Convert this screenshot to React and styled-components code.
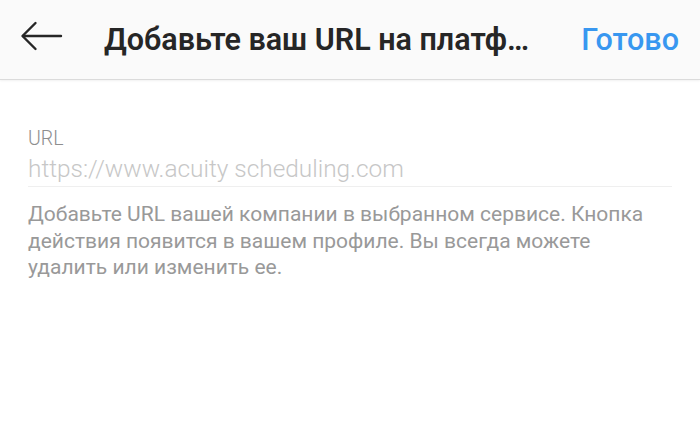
import React from "react";
import styled, { createGlobalStyle } from "styled-components";

const GlobalStyle = createGlobalStyle`
    html, body {
        margin: 0;
        padding: 0;
        background: #ffffff;
    }
    body {
        font-family: Roboto, "Noto Sans", sans-serif;
    }
`;

const Page = styled.div`
    width: 700px;
    height: 421px;
    background: #ffffff;
    overflow: hidden;
`;

const Header = styled.div`
    height: 80px;
    display: flex;
    align-items: center;
    background: #fafafa;
    border-bottom: 1px solid #dbdbdb;
    box-shadow: 0 1px 2px rgba(0, 0, 0, 0.06);
    padding: 0 21px 0 20px;
    box-sizing: border-box;
`;

const BackButton = styled.div`
    width: 44px;
    height: 44px;
    display: flex;
    align-items: center;
    color: #262626;
`;

const Title = styled.div`
    margin-left: 40px;
    width: 428px;
    font-size: 30.5px;
    font-weight: 600;
    color: #262626;
    white-space: nowrap;
    overflow: hidden;
    text-overflow: ellipsis;
`;

const DoneButton = styled.div`
    margin-left: auto;
    font-size: 30.5px;
    font-weight: 500;
    color: #3897f0;
`;

const Body = styled.div`
    padding: 48px 28px 0 28px;
`;

const Label = styled.div`
    font-size: 19.5px;
    font-weight: 300;
    color: #8e8e8e;
    line-height: 22px;
`;

const Field = styled.div`
    margin-top: 4px;
    padding-bottom: 2px;
    border-bottom: 1px solid #efefef;
    font-size: 24.4px;
    font-weight: 300;
    color: #c7c7c7;
    line-height: 30px;
`;

const Hint = styled.p`
    margin: 14px 0 0 0;
    font-size: 21px;
    font-weight: 400;
    color: #999999;
    line-height: 26.5px;
`;

const BackArrow = () => (
    <svg width="44" height="44" viewBox="0 0 44 44" fill="none">
        <path d="M3 18 L41 18" stroke="currentColor" strokeWidth="2.4" strokeLinecap="round" />
        <path d="M15.5 5 L2.5 18 L15.5 31" stroke="currentColor" strokeWidth="2.4" strokeLinecap="round" strokeLinejoin="round" />
    </svg>
);

export default function App() {
    return (
        <Page>
            <GlobalStyle />
            <Header>
                <BackButton>
                    <BackArrow />
                </BackButton>
                <Title>Добавьте ваш URL на платформу бронирования</Title>
                <DoneButton>Готово</DoneButton>
            </Header>
            <Body>
                <Label>URL</Label>
                <Field>https://www.acuity scheduling.com</Field>
                <Hint>
                    Добавьте URL вашей компании в выбранном сервисе. Кнопка
                    действия появится в вашем профиле. Вы всегда можете
                    удалить или изменить ее.
                </Hint>
            </Body>
        </Page>
    );
}
